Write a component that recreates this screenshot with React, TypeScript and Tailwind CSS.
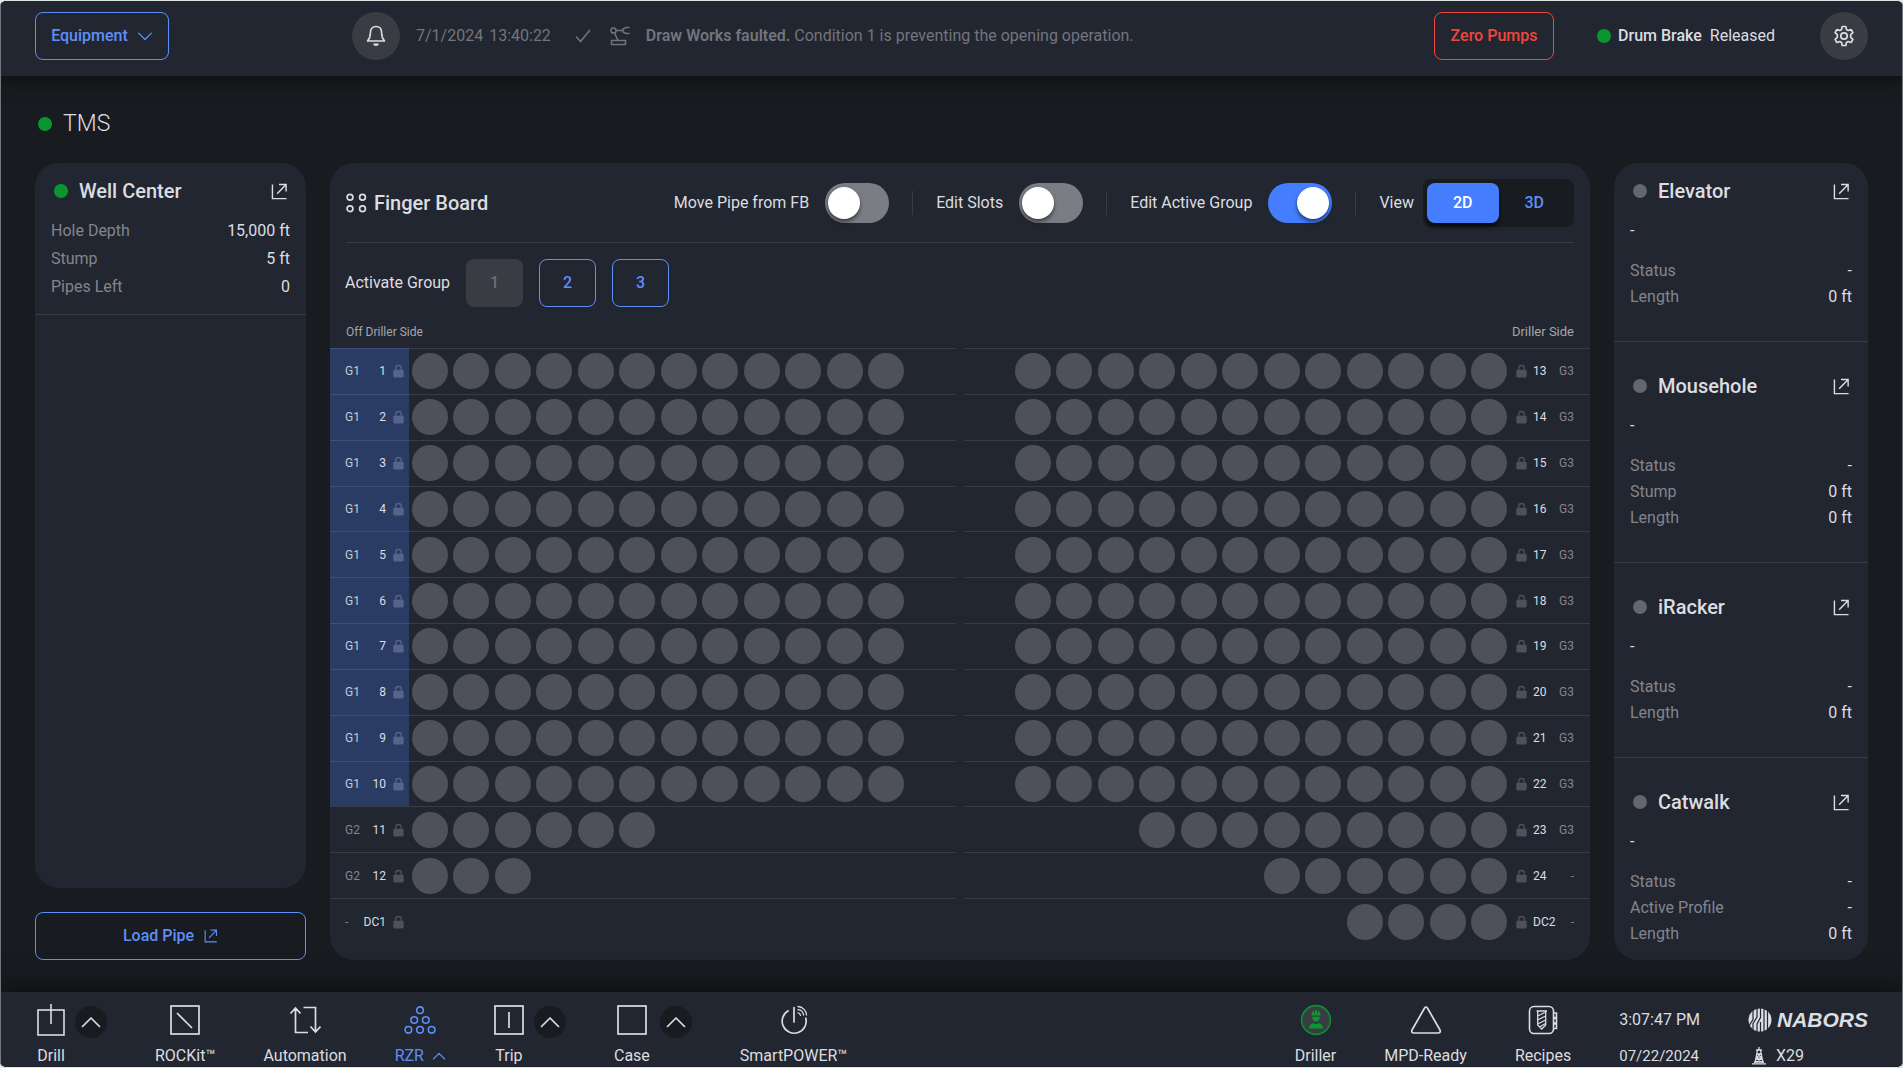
import type { ReactNode } from "react";
import { useState } from "react";
import clsx from "clsx";

type Stat = { label: string; value: string };

type Slot = { group: string; name: string; pipes: number; active?: boolean };

const wellStats: Stat[] = [
  { label: "Hole Depth", value: "15,000 ft" },
  { label: "Stump", value: "5 ft" },
  { label: "Pipes Left", value: "0" }
];

const machines: { name: string; stats: Stat[] }[] = [
  {
    name: "Elevator",
    stats: [
      { label: "Status", value: "-" },
      { label: "Length", value: "0 ft" }
    ]
  },
  {
    name: "Mousehole",
    stats: [
      { label: "Status", value: "-" },
      { label: "Stump", value: "0 ft" },
      { label: "Length", value: "0 ft" }
    ]
  },
  {
    name: "iRacker",
    stats: [
      { label: "Status", value: "-" },
      { label: "Length", value: "0 ft" }
    ]
  },
  {
    name: "Catwalk",
    stats: [
      { label: "Status", value: "-" },
      { label: "Active Profile", value: "-" },
      { label: "Length", value: "0 ft" }
    ]
  }
];

const offDrillerSlots: Slot[] = [
  ...Array.from({ length: 10 }, (_, i) => ({ group: "G1", name: String(i + 1), pipes: 12, active: true })),
  { group: "G2", name: "11", pipes: 6 },
  { group: "G2", name: "12", pipes: 3 },
  { group: "-", name: "DC1", pipes: 0 }
];

const drillerSlots: Slot[] = [
  ...Array.from({ length: 10 }, (_, i) => ({ group: "G3", name: String(i + 13), pipes: 12 })),
  { group: "G3", name: "23", pipes: 9 },
  { group: "-", name: "24", pipes: 6 },
  { group: "-", name: "DC2", pipes: 4 }
];

/* ---------- icons ---------- */

function Chevron({ className }: { className: string }) {
  return (
    <svg viewBox="0 0 20 12" className={className} fill="none" stroke="currentColor" strokeWidth="1.7" strokeLinecap="round" strokeLinejoin="round">
      <path d="M1.5 10.5 10 2l8.5 8.5" />
    </svg>
  );
}

function OpenIcon({ className }: { className: string }) {
  return (
    <svg viewBox="0 0 18 18" className={className} fill="none" stroke="currentColor" strokeWidth="1.5">
      <path d="M1.5 1.5v15h15M6.5 11.5l9-9.500M8.500 1.500h7.500v7.500" />
    </svg>
  );
}

function BellIcon() {
  return (
    <svg viewBox="0 0 20 22" className="h-[22px] w-5" fill="none" stroke="currentColor" strokeWidth="1.6" strokeLinejoin="round">
      <path d="M10 1.5c-3.600 0-5.600 2.600-5.600 6.200 0 4-.9 6-2.900 8.300h17c-2-2.300-2.900-4.300-2.900-8.300 0-3.600-2-6.200-5.600-6.200z" />
      <path d="M8 19.200c.5 1.300 3.500 1.300 4 0z" fill="currentColor" />
    </svg>
  );
}

function GearIcon() {
  return (
    <svg viewBox="0 0 24 24" className="size-6" fill="none" stroke="currentColor" strokeWidth="1.7" strokeLinejoin="round">
      <path d="M10.200 2.500h3.600l.6 2.900 1.900 1.100 2.800-1 1.800 3.100-2.200 2v2.800l2.200 2-1.800 3.100-2.800-1-1.900 1.100-.6 2.900h-3.600l-.6-2.900-1.900-1.100-2.800 1-1.800-3.100 2.200-2v-2.800l-2.200-2 1.800-3.100 2.800 1 1.900-1.100z" />
      <circle cx="12" cy="12" r="3.2" />
    </svg>
  );
}

function RobotArmIcon() {
  return (
    <svg viewBox="0 0 22 20" className="h-5 w-[22px]" fill="none" stroke="currentColor" strokeWidth="1.5">
      <circle cx="4.5" cy="4.5" r="2.6" />
      <path d="M7.100 4.500H14M5.500 7l3.500 7.500M20.500 1.500h-3.500L14 3v3l3 1.500h3.500" />
      <rect x="2.5" y="14.5" width="14" height="4" />
    </svg>
  );
}

function LockIcon({ className }: { className?: string }) {
  return (
    <svg viewBox="0 0 12 14" className={clsx("h-3.5 w-[11px] shrink-0", className)}>
      <path d="M3 6V4a3 3 0 0 1 6 0v2" fill="none" stroke="currentColor" strokeWidth="1.4" />
      <rect x=".3" y="5.5" width="11.4" height="8.5" rx="1.5" fill="currentColor" />
    </svg>
  );
}

function FingerBoardIcon() {
  return (
    <svg viewBox="0 0 21 20" className="h-5 w-[21px]" fill="none" stroke="currentColor" strokeWidth="1.7">
      <circle cx="4" cy="4.3" r="2.9" />
      <circle cx="16.5" cy="4.3" r="2.9" />
      <circle cx="4" cy="15.7" r="2.9" />
      <circle cx="16.5" cy="15.7" r="2.9" />
    </svg>
  );
}

function DrillIcon() {
  return (
    <svg viewBox="0 0 28 32" className="h-8 w-7" fill="none" stroke="currentColor" strokeWidth="1.6">
      <rect x="1" y="6" width="26" height="25" />
      <path d="M14 0v20" />
    </svg>
  );
}

function BoxIcon({ line }: { line?: string }) {
  return (
    <svg viewBox="0 0 30 30" className="size-[30px]" fill="none" stroke="currentColor" strokeWidth="1.7">
      <rect x="1" y="1" width="28" height="28" />
      {line && <path d={line} />}
    </svg>
  );
}

function AutomationIcon() {
  return (
    <svg viewBox="0 0 32 28" className="h-7 w-8" fill="none" stroke="currentColor" strokeWidth="1.7">
      <path d="M19 26.500H6.500V2M1.500 7.500l5-5.500 5 5.500M14.500 1.500h12V26M21.500 20.500l5 5.500 5-5.500" />
    </svg>
  );
}

function RzrIcon() {
  return (
    <svg viewBox="0 0 32 28" className="h-7 w-8" fill="none" stroke="currentColor" strokeWidth="1.6">
      <circle cx="16" cy="4.2" r="3.3" />
      <circle cx="10.2" cy="14" r="3.3" />
      <circle cx="21.8" cy="14" r="3.3" />
      <circle cx="4.4" cy="23.8" r="3.3" />
      <circle cx="16" cy="23.8" r="3.3" />
      <circle cx="27.6" cy="23.8" r="3.3" />
    </svg>
  );
}

function PowerIcon() {
  return (
    <svg viewBox="0 0 28 30" className="h-[30px] w-7" fill="none" stroke="currentColor" strokeWidth="1.7" strokeLinecap="round">
      <path d="M8.200 5.800A12 12 0 1 0 25.800 13.200M14 2.500v14.500" />
      <path d="M18 1.500a9 9 0 0 1 8.500 8.500M18 4.700a6 6 0 0 1 5.500 5.300M18 7.800a3 3 0 0 1 2.500 2.500" strokeWidth="1.3" />
    </svg>
  );
}

function DrillerIcon() {
  return (
    <svg viewBox="0 0 32 32" className="size-8">
      <circle cx="16" cy="16" r="14.4" fill="#393c43" stroke="#0a8f30" strokeWidth="1.6" />
      <g fill="#0a962f">
        <path d="M11.500 10.500a4.500 4.500 0 0 1 2.500-4v2.500h.9V6h2.200v3h.9V6.500a4.500 4.500 0 0 1 2.500 4v1h-9z" />
        <path d="M12.300 12.700h7.400c0 2.800-1.500 4.800-3.700 4.800s-3.700-2-3.700-4.800z" />
        <path d="M9 24.500c0-3.200 1.800-5 4.500-5.300 1.500 1.200 3.500 1.200 5 0 2.700.3 4.500 2.100 4.500 5.300z" />
      </g>
    </svg>
  );
}

function TriangleIcon() {
  return (
    <svg viewBox="0 0 32 30" className="h-[30px] w-8" fill="none" stroke="currentColor" strokeWidth="1.7" strokeLinejoin="round">
      <path d="M14.600 3q1.400-2 2.800 0L30 25q1 3-2 3H4q-3 0-2-3z" />
    </svg>
  );
}

function RecipesIcon() {
  return (
    <svg viewBox="0 0 30 30" className="size-[30px]" fill="none" stroke="currentColor" strokeWidth="1.6">
      <rect x="1.5" y="1.5" width="24" height="27" rx="4.5" />
      <path d="M25.500 8h3v4.500h-3M25.500 13.500h3V18h-3M25.500 19h3v4.500h-3" />
      <path d="M8.500 6H19M9.700 6v14l4 4 4-4V6M9.700 11l7-3.500M9.700 15l8-4M9.700 19l8-4M11.500 22l6-3.500" strokeWidth="1.3" />
    </svg>
  );
}

function NaborsMark() {
  return (
    <svg viewBox="0 0 24 24" className="size-6">
      <circle cx="12" cy="12" r="11.5" fill="#dcdde3" />
      <path
        d="M5 1v10.500L1.500 17M9 0v9L5 15.500V23M12.500 0v9.500L9 16v8M16 0v24M12.500 14v10M19.500 1v22"
        fill="none"
        stroke="#222630"
        strokeWidth="1.2"
      />
    </svg>
  );
}

function RigIcon() {
  return (
    <svg viewBox="0 0 14 18" className="h-[18px] w-3.5" fill="none" stroke="currentColor" strokeWidth="1.3">
      <path d="M5.500 3 3 16M8.500 3 11 16M4 3h6M7 0v3M5 7l4 3M9 7l-4 3M4 11l6 4M10 11l-6 4M4.500 7h5M4 11h6M0 16.800h14M2 15h10" />
    </svg>
  );
}

/* ---------- small pieces ---------- */

function StatusDot({ on }: { on?: boolean }) {
  return <span className={clsx("size-3.5 shrink-0 rounded-full", on ? "bg-[#0a962f]" : "bg-[#64666d]")} />;
}

function CardTitle({ title, on }: { title: string; on?: boolean }) {
  return (
    <div className="flex h-7 items-center pl-[3px]">
      <StatusDot on={on} />
      <h2 className="ml-[11px] text-xl font-medium">{title}</h2>
      <button className="ml-auto mr-0.5" aria-label={`Open ${title}`}>
        <OpenIcon className="size-[17px]" />
      </button>
    </div>
  );
}

function StatRow({ label, value }: Stat) {
  return (
    <div className="flex justify-between">
      <dt className="text-[#82858d]">{label}</dt>
      <dd>{value}</dd>
    </div>
  );
}

function Toggle({ label, defaultChecked }: { label: string; defaultChecked?: boolean }) {
  return (
    <label className="flex items-center gap-4">
      {label}
      <input
        type="checkbox"
        role="switch"
        defaultChecked={defaultChecked}
        className="flex h-10 w-16 appearance-none items-center rounded-full bg-[#7b7d85] px-[3px] before:size-8 before:rounded-full before:bg-white before:shadow-[0_3px_4px_rgba(0,0,0,0.5)] checked:justify-end checked:bg-[#447eff]"
      />
    </label>
  );
}

function Pipes({ slot }: { slot: Slot }) {
  return (
    <>
      {Array.from({ length: slot.pipes }, (_, i) => (
        <button key={i} className="size-9 rounded-full bg-[#4e5159]" aria-label={`Slot ${slot.name} position ${i + 1}`} />
      ))}
    </>
  );
}

function LeftRow({ slot }: { slot: Slot }) {
  return (
    <div className="flex min-h-10">
      <div className={clsx("flex w-[79px] shrink-0 items-center border-t border-white/10 pl-[15px] pr-[5px] text-xs", slot.active && "bg-[#2b3c64]")}>
        <span className={slot.active ? "text-[#c5c9d3]" : "text-[#82858d]"}>{slot.group}</span>
        <span className="ml-auto">{slot.name}</span>
        <LockIcon className={clsx("ml-[7px]", slot.active ? "text-[#55648a]" : "text-[#4e5159]")} />
      </div>
      <div className="flex flex-1 items-center border-t border-white/10">
        <div className="grid w-[498px] grid-cols-12 justify-items-center">
          <Pipes slot={slot} />
        </div>
      </div>
    </div>
  );
}

function RightRow({ slot }: { slot: Slot }) {
  return (
    <div className="flex min-h-10 items-center border-t border-white/10 pr-4 text-xs">
      {/* rtl so that short rows fill from the driller side */}
      <div dir="rtl" className="ml-auto grid w-[498px] grid-cols-12 justify-items-center">
        <Pipes slot={slot} />
      </div>
      <div className="flex w-16 items-center pl-[6px]">
        <LockIcon className="mr-[6px] text-[#4e5159]" />
        <span>{slot.name}</span>
        <span className="ml-auto text-[#82858d]">{slot.group}</span>
      </div>
    </div>
  );
}

function NavItem({ label, icon, menu, active }: { label: string; icon: ReactNode; menu?: boolean; active?: boolean }) {
  return (
    <div className={clsx("flex gap-[10px]", active && "text-[#5e8ff7]")}>
      <a href="#" className="flex flex-col items-center">
        <span className="flex h-9 items-center">{icon}</span>
        <span className="mt-[7px] flex items-center gap-2 leading-[22px]">
          {label}
          {active && <Chevron className="h-2 w-3.5" />}
        </span>
      </a>
      {menu && (
        <button className="mt-1 grid size-8 place-items-center rounded-full bg-[#181b1f]" aria-label={`${label} menu`}>
          <Chevron className="h-3 w-5" />
        </button>
      )}
    </div>
  );
}

/* ---------- page sections ---------- */

function Header() {
  return (
    <header className="z-10 flex h-[75px] items-center bg-[#222630] px-[34px] pb-[5px] shadow-[0_4px_16px_rgba(0,0,0,0.5)]">
      <button className="flex h-12 w-[134px] shrink-0 items-center justify-center gap-[9px] rounded-lg border border-[#5e8ff7] font-medium text-[#5e8ff7]">
        Equipment
        <Chevron className="h-[9px] w-4 rotate-180" />
      </button>
      <button className="ml-[183px] grid size-12 shrink-0 place-items-center rounded-full bg-[#393c43]" aria-label="Notifications">
        <BellIcon />
      </button>
      <div className="ml-4 flex items-center text-[#72757d]">
        <time>7/1/2024</time>
        <time className="ml-1.5">13:40:22</time>
        <svg viewBox="0 0 16 14" className="ml-6 h-3.5 w-4" fill="none" stroke="currentColor" strokeWidth="1.5">
          <path d="M1 7.500 5.500 12.500 15 1" />
        </svg>
        <span className="ml-[18px] mr-[15px]">
          <RobotArmIcon />
        </span>
        <p>
          <strong className="font-semibold">Draw Works faulted.</strong> Condition 1 is preventing the opening operation.
        </p>
      </div>
      <button className="ml-auto h-12 w-[120px] rounded-lg border border-[#f0463c] font-medium text-[#f0463c]">Zero Pumps</button>
      <div className="ml-[43px] flex items-center">
        <StatusDot on />
        <span className="ml-[7px] font-medium">Drum Brake</span>
        <span className="ml-2">Released</span>
      </div>
      <button className="ml-[45px] grid size-12 place-items-center rounded-full bg-[#393c43]" aria-label="Settings">
        <GearIcon />
      </button>
    </header>
  );
}

function FingerBoard() {
  const [view, setView] = useState("2D");

  return (
    <section className="flex flex-1 flex-col overflow-hidden rounded-3xl bg-[#222630] pb-4">
      <div className="mx-4 flex h-20 items-center border-b border-white/10">
        <FingerBoardIcon />
        <h2 className="ml-[7px] text-xl font-medium">Finger Board</h2>
        <div className="ml-auto flex items-center gap-[23px]">
          <Toggle label="Move Pipe from FB" />
          <span className="h-6 w-px bg-white/10" />
          <Toggle label="Edit Slots" />
          <span className="h-6 w-px bg-white/10" />
          <Toggle label="Edit Active Group" defaultChecked />
          <span className="h-6 w-px bg-white/10" />
          <div className="flex items-center gap-[9px]">
            View
            <div className="flex h-12 w-[151px] rounded-lg bg-[#181b1f] p-1">
              {["2D", "3D"].map((name) => (
                <button
                  key={name}
                  onClick={() => setView(name)}
                  aria-pressed={view === name}
                  className={clsx(
                    "flex-1 rounded-lg font-medium",
                    view === name ? "bg-[#447eff] text-white shadow-[0_4px_4px_rgba(0,0,0,0.6)]" : "text-[#5e8ff7]"
                  )}
                >
                  {name}
                </button>
              ))}
            </div>
          </div>
        </div>
      </div>

      <div className="flex items-center gap-4 px-[15px] pt-4">
        Activate Group
        <button disabled className="h-12 w-[57px] rounded-lg bg-[#393c43] font-medium text-[#6d7078]">1</button>
        <button className="h-12 w-[57px] rounded-lg border border-[#5e8ff7] font-medium text-[#5e8ff7]">2</button>
        <button className="h-12 w-[57px] rounded-lg border border-[#5e8ff7] font-medium text-[#5e8ff7]">3</button>
      </div>

      <div className="flex justify-between px-4 pb-2 pt-[17px] leading-4 text-[#a4a6ac]">
        <span className="text-xs">Off Driller Side</span>
        <span className="text-[13px] leading-4">Driller Side</span>
      </div>

      <div className="grid flex-1 grid-cols-2 gap-2">
        <div className="grid auto-rows-fr">
          {offDrillerSlots.map((slot) => (
            <LeftRow key={slot.name} slot={slot} />
          ))}
        </div>
        <div className="grid auto-rows-fr">
          {drillerSlots.map((slot) => (
            <RightRow key={slot.name} slot={slot} />
          ))}
        </div>
      </div>
    </section>
  );
}

function Footer() {
  return (
    <footer className="z-10 flex h-[75px] justify-between bg-[#222630] px-[34px] pt-[10px] shadow-[0_-4px_24px_rgba(0,0,0,0.5)]">
      <nav className="flex gap-12 pl-0.5">
        <NavItem label="Drill" icon={<DrillIcon />} menu />
        <NavItem label="ROCKit™" icon={<BoxIcon line="M7 8l15 15" />} />
        <NavItem label="Automation" icon={<AutomationIcon />} />
        <NavItem label="RZR" icon={<RzrIcon />} active />
        <NavItem label="Trip" icon={<BoxIcon line="M15 7v16" />} menu />
        <NavItem label="Case" icon={<BoxIcon />} menu />
        <NavItem label="SmartPOWER™" icon={<PowerIcon />} />
      </nav>
      <div className="flex gap-12">
        <NavItem label="Driller" icon={<DrillerIcon />} />
        <NavItem label="MPD-Ready" icon={<TriangleIcon />} />
        <NavItem label="Recipes" icon={<RecipesIcon />} />
        <div className="flex flex-col">
          <time className="flex h-9 items-center">3:07:47 PM</time>
          <time className="mt-[7px] text-[15px] leading-[22px]">07/22/2024</time>
        </div>
        <div className="flex flex-col">
          <div className="flex h-9 items-center gap-[5px] text-[#dcdde3]">
            <NaborsMark />
            <span className="font-['Liberation_Sans',Arial,sans-serif] text-[21px] font-bold italic">NABORS</span>
          </div>
          <div className="mt-[7px] flex items-center gap-[10px] pl-1 leading-[22px]">
            <RigIcon />
            X29
          </div>
        </div>
      </div>
    </footer>
  );
}

export default function App() {
  return (
    <div className="bg-[#e6eae8]">
      <div className="flex min-h-screen flex-col overflow-hidden rounded-md border border-x-[#74777c] border-y-[#dfe5e2] bg-[#181b1f] font-[Roboto,sans-serif] text-base text-[#dcdde0]">
        <Header />
        <main className="flex flex-1 flex-col px-[34px] pb-8 pt-[34px]">
          <div className="flex h-7 items-center gap-[11px] pl-[3px]">
            <StatusDot on />
            <h1 className="text-[23px] font-light">TMS</h1>
          </div>

          <div className="mt-[25px] flex flex-1 gap-6">
            <aside className="flex w-[271px] shrink-0 flex-col gap-6">
              <section className="flex-1 rounded-3xl bg-[#222630]">
                <div className="border-b border-white/10 px-4 pb-[13px] pt-[14px]">
                  <CardTitle title="Well Center" on />
                  <dl className="mt-3 leading-7">
                    {wellStats.map((stat) => (
                      <StatRow key={stat.label} {...stat} />
                    ))}
                  </dl>
                </div>
              </section>
              <button className="flex h-12 items-center justify-center gap-[10px] rounded-lg border border-[#5e8ff7] font-medium text-[#5e8ff7]">
                Load Pipe
                <OpenIcon className="size-3.5" />
              </button>
            </aside>

            <FingerBoard />

            <aside className="w-[254px] shrink-0 divide-y divide-white/10 rounded-3xl bg-[#222630]">
              {machines.map((machine) => (
                <section key={machine.name} className="px-4 pb-[31px] pt-[30px] first:pt-[14px] last:pb-3">
                  <CardTitle title={machine.name} />
                  <p className="mt-[13px] leading-[26px]">-</p>
                  <dl className="mt-[14px] leading-[26px]">
                    {machine.stats.map((stat) => (
                      <StatRow key={stat.label} {...stat} />
                    ))}
                  </dl>
                </section>
              ))}
            </aside>
          </div>
        </main>
        <Footer />
      </div>
    </div>
  );
}
